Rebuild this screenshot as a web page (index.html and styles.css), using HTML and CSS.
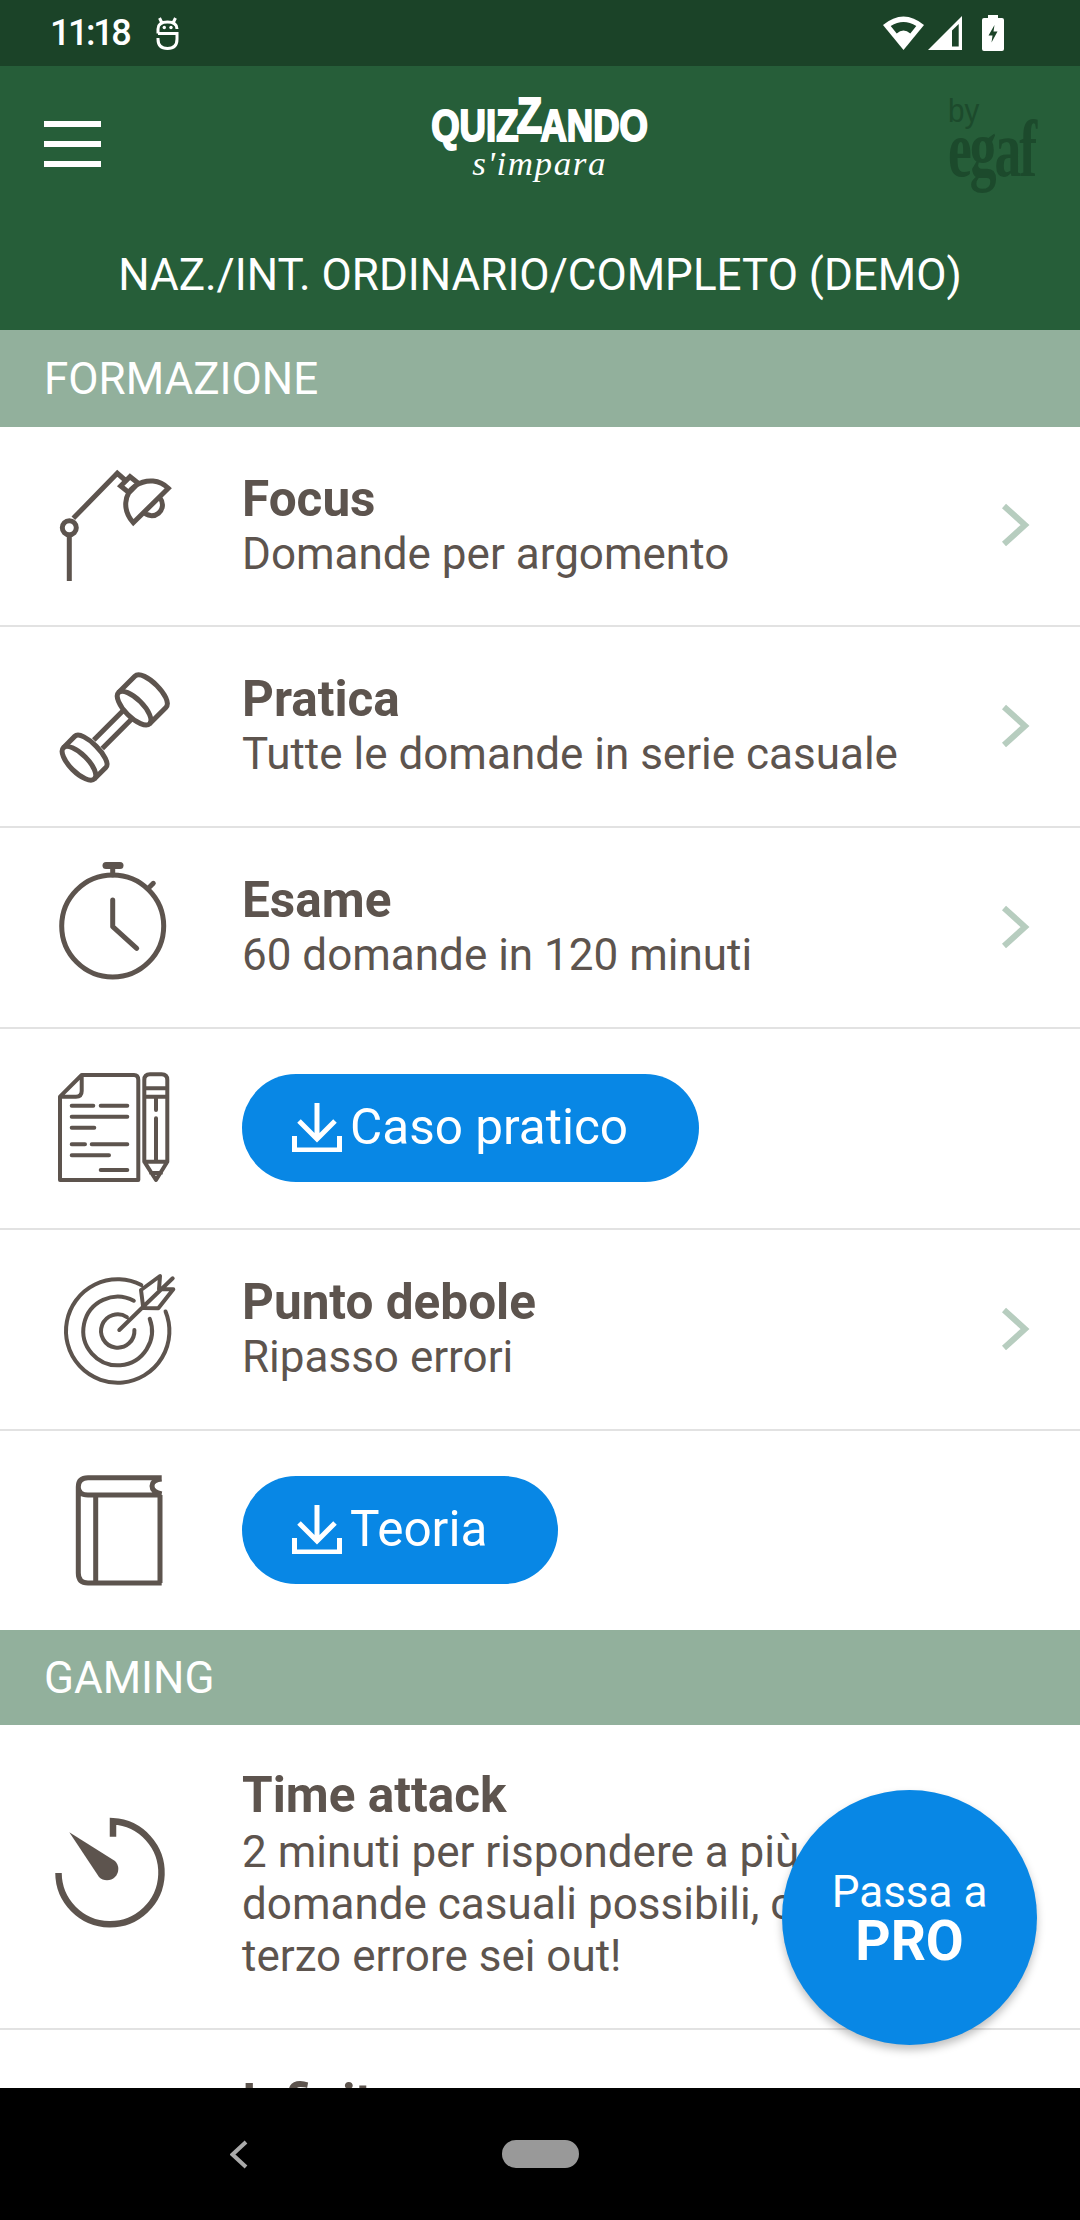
FILE: index.html
```html
<!DOCTYPE html>
<html lang="it">
<head>
<meta charset="utf-8">
<title>Quizzando</title>
<link rel="stylesheet" href="styles.css">
</head>
<body>
<div class="screen">
  <header class="status">
    <span class="clock">11:18</span>
    <svg class="st-face" width="23" height="33" viewBox="0 0 23 33"><path d="M3.500 1 5.500 5M19.500 1 17.500 5M2 16.500V12Q2 5 11.500 5 21 5 21 12M2 16.500H21V22Q21 31.500 11.500 31.500 2 31.500 2 22V21" fill="none" stroke="#fff" stroke-width="3"/><circle cx="8.300" cy="10.500" r="1.700" fill="#fff"/><circle cx="15" cy="10.500" r="1.700" fill="#fff"/></svg>
    <span class="spacer"></span>
    <svg class="st-wifi" width="41" height="34" viewBox="0 0 41 34"><path d="M0 9Q20.500-8 41 9L20.500 34Z" fill="#fff"/><path d="M7.700 10Q20.500 2 33.300 10L27.300 17.500Q20.500 11.500 13.700 17.500Z" fill="#1b4328"/></svg>
    <svg class="st-signal" width="34" height="34" viewBox="0 0 34 34"><path d="M34 0V34H0Z" fill="#fff"/><path d="M24 14.500 30.700 8V30.500H24Z" fill="#1b4328"/></svg>
    <svg class="st-batt" width="22" height="36" viewBox="0 0 22 36"><path d="M6 0h10v3h4a2 2 0 0 1 2 2v29a2 2 0 0 1-2 2H2a2 2 0 0 1-2-2V5a2 2 0 0 1 2-2h4Z" fill="#fff"/><path d="M12.500 10 6.500 20.500h4l-1 7 6-11h-4Z" fill="#1b4328"/></svg>
  </header>

  <section class="appbar">
    <div class="appbar-top">
      <div class="burger"><i></i><i></i><i></i></div>
      <div class="logo">
        <div class="logo-main">QUIZ<span class="logo-z">Z</span>ANDO</div>
        <div class="logo-sub">s'impara</div>
      </div>
      <div class="egaf">
        <div class="egaf-by">by</div>
        <div class="egaf-name">egaf</div>
      </div>
    </div>
    <h1 class="title">NAZ./INT. ORDINARIO/COMPLETO (DEMO)</h1>
  </section>

  <main class="list">
    <h2 class="section section-first">FORMAZIONE</h2>

    <a class="row row-first">
      <svg class="ico" viewBox="0 0 242 200"><g class="ln"><circle cx="69.300" cy="101.700" r="7"/><path d="M69.300 109V155M73.300 92.300 117.300 47.300 125 54M120.700 60 130 50.700 138.300 57.300 129 66.700ZM133.300 96.700C122 84 124 68 135 60 147 52 160 54 168.300 62.300ZM143.300 85.700A10.800 10.800 0 0 0 160 72"/></g></svg>
      <div class="txt"><div class="t">Focus</div><div class="s">Domande per argomento</div></div>
      <svg class="chev" viewBox="0 0 30 46"><path d="M4 4 25 23 4 42"/></svg>
    </a>

    <a class="row">
      <svg class="ico" viewBox="0 1 242 200"><g class="ln" transform="translate(115 101.200) rotate(-45)"><ellipse cx="27" cy="0" rx="9" ry="22"/><path d="M27-22H50C62-22 62 22 50 22H27M-51-22H-35C-24-22-24 22-35 22H-51M-24-6H18M-24 6H18"/><ellipse cx="-51" cy="0" rx="9" ry="22"/></g></svg>
      <div class="txt"><div class="t">Pratica</div><div class="s">Tutte le domande in serie casuale</div></div>
      <svg class="chev" viewBox="0 0 30 46"><path d="M4 4 25 23 4 42"/></svg>
    </a>

    <a class="row">
      <svg class="ico" viewBox="0 1 242 200"><g class="ln ln-round"><circle cx="112.700" cy="99" r="51"/><path d="M112.700 40V48M148.300 61.300 153.300 56.300M112.700 73V99.700L136.700 121.300"/><path class="cap" d="M106 38.500H120"/></g></svg>
      <div class="txt"><div class="t">Esame</div><div class="s">60 domande in 120 minuti</div></div>
      <svg class="chev" viewBox="0 0 30 46"><path d="M4 4 25 23 4 42"/></svg>
    </a>

    <a class="row">
      <svg class="ico" viewBox="0 1 242 200"><g class="ln ln-thin ln-round"><path d="M81.700 47H134Q138.300 47 138.300 52V152H60V68.700ZM81.700 47V63Q81.700 68.700 76 68.700H60M71.700 77.700H93.300M100.700 77.700H127.300M71.700 88.700H127.300M71.700 99.700H94.300M71.700 116.300H85M91.700 116.300H127.300M71.700 127.300H109M100.700 142H127.300"/><path d="M144.300 52Q144.300 46.300 150 46.300H161.600Q167.300 46.300 167.300 52V133.700L156 152 144.300 133.700ZM144.300 60.300H167.300M144.300 68.700H167.300M156 68.700V82M156 90.300V133.700M144.300 133.700H167.300M151 145H161"/></g></svg>
      <div class="btn"><svg class="dl" viewBox="0 0 50 50"><path d="M25 1V37M7 19 25 37 43 19M2.500 34V48H47.500V34"/></svg><span>Caso pratico</span></div>
    </a>

    <a class="row">
      <svg class="ico" viewBox="0 1 242 200"><g class="ln ln-thin ln-round"><path d="M165.570 82.470A51.700 51.700 0 1 1 141.300 56M149.700 89.800A34.300 34.300 0 1 1 133.800 71.700M134.400 101A16.700 16.700 0 1 1 126.900 88.050M119.300 101 145 76M143.300 79 141 61 160 47 159 60.300H173.300L158.300 79.300ZM145 76 172.700 49.300"/></g></svg>
      <div class="txt"><div class="t">Punto debole</div><div class="s">Ripasso errori</div></div>
      <svg class="chev" viewBox="0 0 30 46"><path d="M4 4 25 23 4 42"/></svg>
    </a>

    <a class="row row-last">
      <svg class="ico" viewBox="0 1 242 200"><g class="ln"><path d="M161.700 47.700H88Q78.300 47.700 78.300 57V143Q78.300 153 88 153H161.700M161.700 65H88Q78.300 65 78.300 57M160 65V153M95.700 65V153M161.700 49Q152 50 152 56T161.700 64"/></g></svg>
      <div class="btn"><svg class="dl" viewBox="0 0 50 50"><path d="M25 1V37M7 19 25 37 43 19M2.500 34V48H47.500V34"/></svg><span>Teoria</span></div>
    </a>

    <h2 class="section">GAMING</h2>

    <a class="row row-tall">
      <svg class="ico" viewBox="0 0 242 304"><g class="ln ln-bold"><path d="M113 111.700V96.300A51.500 51.500 0 1 1 58.500 148"/></g><path class="fillp" d="M69.300 107.300 115 136A11 11 0 0 1 99 152Z"/></svg>
      <div class="txt"><div class="t">Time attack</div><div class="s">2 minuti per rispondere a più<br>domande casuali possibili, col<br>terzo errore sei out!</div></div>
    </a>

    <a class="row">
      <div class="ico"></div>
      <div class="txt"><div class="t">Infinity</div><div class="s">Domande a oltranza</div></div>
    </a>
  </main>

  <nav class="navbar">
    <svg class="nav-back" width="20" height="30" viewBox="0 0 20 30"><path d="M16 2 2.500 14.500 16 27"/></svg>
    <span class="nav-pill"></span>
  </nav>

  <button class="fab"><span class="fab-a">Passa a</span><span class="fab-b">PRO</span></button>
</div>
</body>
</html>
```
FILE: styles.css
```css
* { box-sizing: border-box; }
html, body { margin: 0; padding: 0; }
body { font-family: Roboto, "Liberation Sans", sans-serif; background: #fff; }
.screen { position: relative; width: 1080px; height: 2220px; overflow: hidden; display: flex; flex-direction: column; }

.status { height: 66px; flex: none; background: #1b4328; color: #fff; display: flex; align-items: center; padding: 0 76px 0 50px; }
.clock { font-size: 36px; font-weight: 500; letter-spacing: -2.400px; margin-right: 27px; }
.spacer { flex: 1; }
.st-wifi { margin-right: 4px; }
.st-signal { margin-right: 20px; }

.appbar { height: 264px; flex: none; background: #265e39; color: #fff; display: flex; flex-direction: column; }
.appbar-top { position: relative; height: 140px; display: flex; align-items: center; justify-content: center; }
.burger { position: absolute; left: 44px; top: 55px; width: 57px; display: flex; flex-direction: column; gap: 14px; }
.burger i { display: block; height: 6px; background: #fff; }
.logo { display: flex; flex-direction: column; align-items: center; margin-top: 8px; }
.logo-main { font-family: "Liberation Sans", sans-serif; font-weight: 700; font-size: 44px; line-height: 46px; transform: scaleX(.83); -webkit-text-stroke: 2px #fff; }
.logo-z { font-size: 50px; line-height: 40px; display: inline-block; transform: translateY(-8px); margin: 0 -2px; }
.logo-sub { font-family: "Liberation Serif", serif; font-style: italic; font-size: 33px; line-height: 28px; letter-spacing: 1.500px; transform: scaleX(1.060); margin-top: 1px; }
.egaf { position: absolute; left: 948px; top: 28px; color: #1c4a2c; }
.egaf-by { font-family: "Liberation Sans", sans-serif; font-size: 33px; line-height: 34px; transform: scaleX(.9); transform-origin: left; }
.egaf-name { font-family: "Liberation Serif", serif; font-weight: 700; font-size: 80px; line-height: 50px; letter-spacing: -3px; transform: scaleX(.67); transform-origin: left; margin-top: -4px; }
.title { margin: 41px 0 0; text-align: center; font-weight: 400; font-size: 44px; line-height: 56px; }

.list { flex: 1; overflow: hidden; }
.section { margin: 0; height: 95px; padding: 0 44px; display: flex; align-items: center; background: #92b09c; color: #fff; font-weight: 400; font-size: 44px; }
.section-first { height: 97px; }
.row { display: flex; align-items: center; height: 201px; border-bottom: 2px solid #e2e2e2; position: relative; color: #5d544e; }
.row-first { height: 200px; }
.row-first .ico { margin-top: -1px; }
.row-first .chev { top: 75px; }
.row-last { height: 199px; border-bottom: 0; }
.row-tall { height: 305px; }
.ico { width: 242px; height: 200px; flex: none; display: block; align-self: flex-start; overflow: visible; }
.row-tall .ico { height: 304px; }
.ln { fill: none; stroke: #5d544e; stroke-width: 5; }
.ln-thin { stroke-width: 4; }
.ln-bold { stroke-width: 6.500; }
.ln-round { stroke-linecap: round; stroke-linejoin: round; }
.cap { stroke-width: 7; }
.fillp { fill: #5d544e; }
.txt { flex: 1; }
.t { font-size: 49.500px; line-height: 58px; font-weight: 700; white-space: nowrap; }
.s { font-size: 44px; line-height: 52px; padding-bottom: 3px; white-space: nowrap; }
.row-tall .t { line-height: 62px; }
.row-tall .s { padding-bottom: 7px; }
.chev { position: absolute; left: 1000px; top: 76px; width: 30px; height: 46px; fill: none; stroke: #b7cdbf; stroke-width: 6; }
.btn { height: 108px; margin-top: -1px; padding: 0 71px 3px 50px; border-radius: 54px; background: #0887e5; color: #fff; display: flex; align-items: center; gap: 8px; font-size: 49.500px; }
.dl { width: 50px; height: 50px; fill: none; stroke: #fff; stroke-width: 5; }

.navbar { height: 132px; flex: none; background: #000; position: relative; display: flex; align-items: center; justify-content: center; }
.nav-back { position: absolute; left: 230px; top: 52px; fill: none; stroke: #aaa; stroke-width: 4; }
.nav-pill { width: 77px; height: 28px; border-radius: 14px; background: #999; }

.fab { position: absolute; left: 782px; top: 1790px; width: 255px; height: 255px; border: 0; border-radius: 50%; background: #0887e5; color: #fff; font-family: inherit; display: flex; flex-direction: column; align-items: center; justify-content: center; padding: 0 0 3px; box-shadow: 0 5px 8px rgba(0,0,0,.25); }
.fab-a { font-size: 44px; line-height: 50px; }
.fab-b { font-size: 55px; line-height: 48px; font-weight: 700; }
```
